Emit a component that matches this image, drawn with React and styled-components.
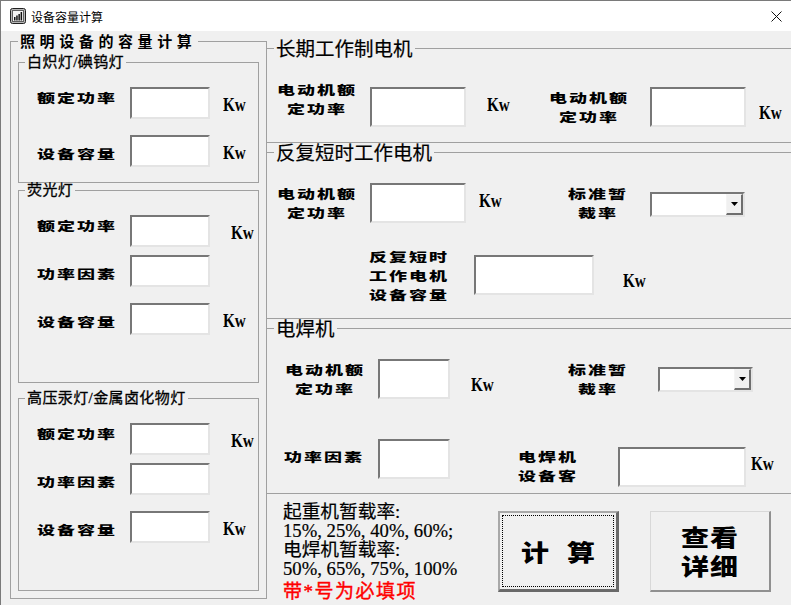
import React from "react";
import styled, { createGlobalStyle } from "styled-components";

const GlobalStyle = createGlobalStyle`
    html, body {
        margin: 0;
        padding: 0;
        background: #f0f0f0;
    }
    * {
        box-sizing: border-box;
    }
`;

const serif = `"Liberation Serif", "Noto Sans CJK SC", serif`;
const cjk = `"Noto Sans CJK SC", sans-serif`;

function AppIcon() {
    return (
        <svg width="16" height="16" viewBox="0 0 16 16">
            <rect x="0.5" y="0.5" width="15" height="15" rx="2" fill="#b8b8b8" stroke="#202020" />
            <rect x="2.500" y="2.500" width="11" height="11" fill="#f4f4f4" stroke="#606060" strokeWidth="1" />
            <path d="M4 9h1.500v3.500H4zM6.200 7.500h1.500v5H6.200zM8.400 6h1.500v6.500H8.400zM10.600 4h1.500v8.500h-1.500z" fill="#111" />
        </svg>
    );
}

function CloseIcon() {
    return (
        <svg width="11" height="11" viewBox="0 0 11 11">
            <path d="M0.500 0.500l10 10M10.500 0.500l-10 10" stroke="#111" strokeWidth="1" fill="none" />
        </svg>
    );
}

function Combo({ ml, mt }) {
    return (
        <ComboBox $ml={ml} $mt={mt}>
            <ComboArrow>
                <svg width="7" height="4" viewBox="0 0 7 4">
                    <path d="M0 0h7L3.500 4z" fill="#000" />
                </svg>
            </ComboArrow>
        </ComboBox>
    );
}

function LampRow({ label, unit, gap, labelTop }) {
    return (
        <LampLine $gap={gap}>
            <Label $w={80} $mt={labelTop}>{label}</Label>
            <TextBox $ml={13} $w={80} $h={32} />
            {unit && <Unit $ml={unit} $mt={8}>Kw</Unit>}
        </LampLine>
    );
}

export default function App() {
    return (
        <>
            <GlobalStyle />
            <Window>
                <TitleBar>
                    <AppIcon />
                    <Title>设备容量计算</Title>
                    <CloseSlot>
                        <CloseIcon />
                    </CloseSlot>
                </TitleBar>
                <Body>
                    <LightGroup>
                        <LightLegend>照明设备的容量计算</LightLegend>
                        <LampGroup $h={128}>
                            <LampLegend>白炽灯/碘钨灯</LampLegend>
                            <LampRow label="额定功率" unit={13} gap={16} />
                            <LampRow label="设备容量" unit={13} labelTop={8} />
                        </LampGroup>
                        <LampGroup $h={200}>
                            <LampLegend>荧光灯</LampLegend>
                            <LampRow label="额定功率" unit={21} gap={8} />
                            <LampRow label="功率因素" gap={16} labelTop={8} />
                            <LampRow label="设备容量" unit={13} labelTop={8} />
                        </LampGroup>
                        <LampGroup $h={200} $mt={8}>
                            <LampLegend>高压汞灯/金属卤化物灯</LampLegend>
                            <LampRow label="额定功率" unit={21} gap={8} />
                            <LampRow label="功率因素" gap={16} labelTop={8} />
                            <LampRow label="设备容量" unit={13} labelTop={8} />
                        </LampGroup>
                    </LightGroup>
                    <RightColumn>
                        <Panel $h={111} $first>
                            <MotorGroup>
                                <MotorLegend>长期工作制电机</MotorLegend>
                                <Row $pl={10} $mt={22}>
                                    <Label $w={80}>电动机额<br />定功率</Label>
                                    <TextBox $ml={13} $mt={8} $w={96} $h={40} />
                                    <Unit $ml={21} $mt={16}>Kw</Unit>
                                    <Label $ml={40} $mt={8} $w={80}>电动机额<br />定功率</Label>
                                    <TextBox $ml={21} $mt={8} $w={96} $h={40} />
                                    <Unit $ml={13} $mt={24}>Kw</Unit>
                                </Row>
                            </MotorGroup>
                        </Panel>
                        <Panel $h={176}>
                            <MotorGroup>
                                <MotorLegend>反复短时工作电机</MotorLegend>
                                <Row $pl={10} $mt={22} $h={63}>
                                    <Label $w={80}>电动机额<br />定功率</Label>
                                    <TextBox $ml={13} $w={96} $h={40} />
                                    <Unit $ml={13} $mt={8}>Kw</Unit>
                                    <Label $ml={67} $w={60}>标准暂<br />裁率</Label>
                                    <Combo ml={22} mt={9} />
                                </Row>
                                <Row $pl={102}>
                                    <Label $w={80}>反复短时<br />工作电机<br />设备容量</Label>
                                    <TextBox $ml={25} $mt={9} $w={120} $h={40} />
                                    <Unit $ml={29} $mt={25}>Kw</Unit>
                                </Row>
                            </MotorGroup>
                        </Panel>
                        <Panel $h={175}>
                            <MotorGroup>
                                <MotorLegend>电焊机</MotorLegend>
                                <Row $pl={18} $mt={22} $h={80}>
                                    <Label $w={80}>电动机额<br />定功率</Label>
                                    <TextBox $ml={13} $w={72} $h={40} />
                                    <Unit $ml={21} $mt={16}>Kw</Unit>
                                    <Label $ml={75} $w={60}>标准暂<br />裁率</Label>
                                    <Combo ml={30} mt={8} />
                                </Row>
                                <Row $pl={17}>
                                    <Label $mt={7} $w={80}>功率因素</Label>
                                    <TextBox $ml={14} $w={72} $h={40} />
                                    <Label $ml={68} $mt={7} $w={60}>电焊机<br />设备客</Label>
                                    <TextBox $ml={40} $mt={8} $w={128} $h={40} />
                                    <Unit $ml={5} $mt={15}>Kw</Unit>
                                </Row>
                            </MotorGroup>
                        </Panel>
                        <BottomPanel>
                            <Notes>
                                起重机暂载率:<br />
                                15%, 25%, 40%, 60%;<br />
                                电焊机暂载率:<br />
                                50%, 65%, 75%, 100%
                                <Required>带*号为必填项</Required>
                            </Notes>
                            <ActionButton $focused>
                                <FocusRing>
                                    <ButtonText $spaced>计算</ButtonText>
                                </FocusRing>
                            </ActionButton>
                            <ActionButton $ml={31}>
                                <ButtonText>查看<br />详细</ButtonText>
                            </ActionButton>
                        </BottomPanel>
                    </RightColumn>
                </Body>
            </Window>
        </>
    );
}

const Window = styled.div`
    width: 791px;
    height: 605px;
    overflow: hidden;
    background: #f0f0f0;
    border-left: 1px solid #7a7a7a;
    display: flex;
    flex-direction: column;
`;

const TitleBar = styled.div`
    height: 31px;
    flex-shrink: 0;
    background: #fff;
    border-top: 1px solid #7a7a7a;
    padding: 0 9px;
    display: flex;
    align-items: center;
`;

const Title = styled.div`
    margin-left: 5px;
    font-family: ${cjk};
    font-size: 12px;
    color: #000;
`;

const CloseSlot = styled.div`
    margin-left: auto;
    display: flex;
`;

const Body = styled.div`
    flex: 1;
    display: flex;
    padding-left: 9px;
`;

const LightGroup = styled.fieldset`
    width: 257px;
    height: 568px;
    margin: 0;
    padding: 4px 7px 0 7px;
    border: 1px solid #a0a0a0;
    flex-shrink: 0;
    min-width: 0;
`;

const LightLegend = styled.legend`
    margin-left: 0;
    padding: 0 2px;
    font-family: ${cjk};
    font-weight: 700;
    font-size: 15px;
    letter-spacing: 4.600px;
    line-height: 20px;
    height: 20px;
    color: #000;
`;

const LampGroup = styled.fieldset`
    width: 241px;
    height: ${props => props.$h}px;
    margin: ${props => props.$mt || 0}px 0 0 0;
    padding: 18px 0 0 0;
    border: 1px solid #a0a0a0;
    min-width: 0;
`;

const LampLegend = styled.legend`
    margin-left: 6px;
    padding: 0 2px;
    font-family: ${serif};
    font-size: 15px;
    letter-spacing: 0.400px;
    line-height: 14px;
    height: 14px;
    color: #000;
    -webkit-text-stroke: 0.3px #000;
`;

const LampLine = styled.div`
    display: flex;
    align-items: flex-start;
    height: 32px;
    padding-left: 18px;
    margin-bottom: ${props => props.$gap || 0}px;
`;

const Label = styled.div`
    width: ${props => props.$w}px;
    margin-left: ${props => props.$ml || 0}px;
    margin-top: ${(props => (props.$mt || 0) + 1)}px;
    flex-shrink: 0;
    height: 0;
    font-family: ${cjk};
    font-weight: 900;
    font-size: 18px;
    letter-spacing: 2px;
    line-height: 28px;
    text-align: center;
    white-space: nowrap;
    color: #000;
    transform: scaleY(0.68);
    transform-origin: top left;
`;

const TextBox = styled.input`
    width: ${props => props.$w}px;
    height: ${props => props.$h}px;
    margin: ${props => props.$mt || 0}px 0 0 ${props => props.$ml || 0}px;
    padding: 0;
    flex-shrink: 0;
    background: #fff;
    border-style: solid;
    border-width: 2px;
    border-color: #777 #e4e4e4 #e4e4e4 #777;
    outline: none;
`;

const Unit = styled.span`
    display: block;
    width: 22px;
    height: 20px;
    margin-left: ${props => props.$ml || 0}px;
    margin-top: ${props => props.$mt || 0}px;
    flex-shrink: 0;
    font-family: "Liberation Serif", serif;
    font-weight: 700;
    font-size: 19px;
    line-height: 20px;
    color: #000;
    transform: scaleX(0.8);
    transform-origin: top left;
`;

const RightColumn = styled.div`
    width: 524px;
    flex-shrink: 0;
    display: flex;
    flex-direction: column;
`;

const Panel = styled.section`
    height: ${props => props.$h}px;
    flex-shrink: 0;
    border-top: ${props => props.$first ? "none" : "1px solid #a0a0a0"};
    padding-top: ${props => props.$first ? 8 : 0}px;
`;

const MotorGroup = styled.fieldset`
    margin: 0;
    padding: 0;
    border: none;
    border-top: 1px solid #a0a0a0;
    min-width: 0;
`;

const MotorLegend = styled.legend`
    margin-left: 7px;
    padding: 0 2px;
    font-family: ${serif};
    font-size: 19.500px;
    line-height: 21px;
    height: 18px;
    color: #000;
    -webkit-text-stroke: 0.2px #000;
`;

const Row = styled.div`
    display: flex;
    align-items: flex-start;
    padding-left: ${props => props.$pl || 0}px;
    margin-top: ${props => props.$mt || 0}px;
    height: ${props => props.$h ? `${props.$h}px` : "auto"};
`;

const ComboBox = styled.div`
    width: 95px;
    height: 25px;
    margin-left: ${props => props.$ml}px;
    margin-top: ${props => props.$mt}px;
    flex-shrink: 0;
    background: #fff;
    border-style: solid;
    border-width: 2px;
    border-color: #777 #e4e4e4 #e4e4e4 #777;
    display: flex;
    justify-content: flex-end;
`;

const ComboArrow = styled.div`
    width: 17px;
    height: 21px;
    background: #f0f0f0;
    border-style: solid;
    border-width: 1px 2px 2px 1px;
    border-color: #f4f4f4 #6e6e6e #6e6e6e #f4f4f4;
    display: flex;
    align-items: center;
    justify-content: center;
`;

const BottomPanel = styled.section`
    flex: 1;
    border-top: 1px solid #a0a0a0;
    padding: 8px 0 0 16px;
    display: flex;
    align-items: flex-start;
`;

const Notes = styled.div`
    width: 215px;
    flex-shrink: 0;
    font-family: ${serif};
    font-size: 18.700px;
    line-height: 19px;
    white-space: nowrap;
    color: #000;
    -webkit-text-stroke: 0.2px #000;
`;

const Required = styled.div`
    margin-top: 4px;
    line-height: 20px;
    font-size: 19px;
    letter-spacing: 1.500px;
    color: #ff0000;
    -webkit-text-stroke: 0.4px #ff0000;
`;

const ActionButton = styled.button`
    width: 121px;
    height: 81px;
    margin: 9px 0 0 ${props => props.$ml || 0}px;
    padding: ${props => props.$focused ? "2px" : "0"};
    flex-shrink: 0;
    background: #f0f0f0;
    border-style: solid;
    border-width: ${props => props.$focused ? "2px 3px 3px 2px" : "1px 2px 2px 1px"};
    border-color: ${props => props.$focused ? "#a8a8a8 #696969 #696969 #a8a8a8" : "#d8d8d8 #909090 #909090 #d8d8d8"};
    display: flex;
    align-items: center;
    justify-content: center;
`;

const FocusRing = styled.div`
    width: 100%;
    height: 100%;
    border: 1px dotted #000;
    display: flex;
    align-items: center;
    justify-content: center;
`;

const ButtonText = styled.div`
    font-family: ${cjk};
    font-weight: 900;
    font-size: 28px;
    line-height: 36px;
    letter-spacing: ${props => props.$spaced ? "18px" : "1px"};
    margin-right: ${props => props.$spaced ? "-18px" : "0"};
    color: #000;
    transform: scaleY(0.8);
`;
